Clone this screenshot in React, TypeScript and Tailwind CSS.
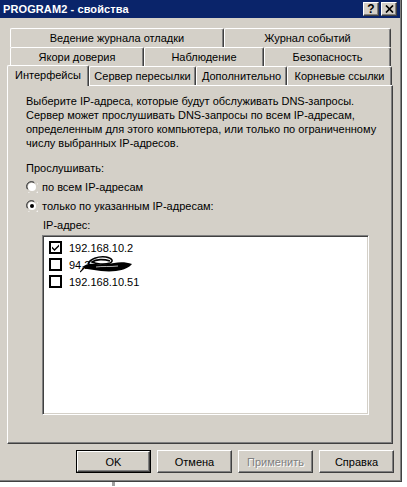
import React from 'react';

// Classic Win2000/2003 3D edges
const raised =
  'border-t border-l border-t-white border-l-white border-r border-b border-r-[#404040] border-b-[#404040] shadow-[inset_-1px_-1px_#808080]';
const sunken =
  'border-t border-l border-t-[#808080] border-l-[#808080] border-r border-b border-r-white border-b-white shadow-[inset_1px_1px_#404040,inset_-1px_-1px_#d4d0c8]';

function Tab({ label, width, selected = false }: { label: string; width: number; selected?: boolean }) {
  return (
    <div
      style={{ width }}
      className={
        'flex items-center justify-center rounded-t-[2px] border-t border-l border-white border-r border-r-[#404040] shadow-[inset_-1px_0_#808080] bg-[#d4d0c8] text-black ' +
        (selected ? 'h-[21px] -mb-px relative z-10 pb-[2px]' : 'h-[19px]')
      }
    >
      {label}
    </div>
  );
}

function TitleButton({ children }: { children: React.ReactNode }) {
  return (
    <div className={'w-[16px] h-[14px] bg-[#d4d0c8] flex items-center justify-center ' + raised}>{children}</div>
  );
}

function Radio({ checked }: { checked?: boolean }) {
  return (
    <svg width="12" height="12" viewBox="0 0 12 12" className="shrink-0">
      <path d="M1 8 A5.5 5.5 0 0 1 8 1" fill="none" stroke="#808080" strokeWidth="1" />
      <path d="M2 8.5 A4.5 4.5 0 0 1 8.5 2" fill="none" stroke="#404040" strokeWidth="1" />
      <circle cx="6" cy="6" r="4" fill="#fff" />
      <path d="M3.5 10.5 A5 5 0 0 0 10.5 3.5" fill="none" stroke="#d4d0c8" strokeWidth="1" />
      <path d="M2.5 11.5 A6 6 0 0 0 11.5 2.5" fill="none" stroke="#fff" strokeWidth="1" />
      {checked && <circle cx="6" cy="6" r="2" fill="#000" />}
    </svg>
  );
}

function Check({ checked }: { checked?: boolean }) {
  return (
    <div className="w-[13px] h-[13px] border-2 border-black bg-white flex items-center justify-center shrink-0">
      {checked && (
        <svg width="9" height="9" viewBox="0 0 9 9">
          <path d="M1 3.5 L3.5 6 L8 1.5 L8 3.5 L3.5 8 L1 5.5 Z" fill="#000" />
        </svg>
      )}
    </div>
  );
}

// black marker scribble that hides the second address
function Scribble() {
  return (
    <svg width="54" height="18" viewBox="0 0 54 18" className="-ml-[10px] -mt-[2px]">
      <path
        d="M2 12 C6 9 10 8 16 9 C22 10 28 9 34 8 C40 7 46 7 52 9 C50 12 44 15 36 16 C28 17 20 16 14 15 C9 14 5 14 2 12 Z"
        fill="#000"
      />
      <path
        d="M8 9 C10 4 18 1 26 2 C32 3 34 6 30 8 C24 10 16 9 12 7 C16 4 24 4 30 6"
        fill="none"
        stroke="#000"
        strokeWidth="1.6"
      />
      <path d="M16 12 C22 11 30 12 38 11" fill="none" stroke="#fff" strokeWidth="0.7" />
      <path d="M4 13 C2 15 1 16 0 17" fill="none" stroke="#000" strokeWidth="1.2" />
    </svg>
  );
}

function Button({ label, isDefault, disabled }: { label: string; isDefault?: boolean; disabled?: boolean }) {
  return (
    <div className={'w-[75px] h-[23px] ' + (isDefault ? 'border border-black' : '')}>
      <div
        className={
          'h-full w-full flex items-center justify-center bg-[#d4d0c8] ' +
          raised +
          (disabled ? ' text-[#808080] [text-shadow:1px_1px_#fff]' : ' text-black')
        }
      >
        {label}
      </div>
    </div>
  );
}

export default function App() {
  return (
    <div className="w-[407px] h-[487px] bg-white font-['Liberation_Sans',Arial,sans-serif] text-[11px] leading-[14px] overflow-hidden">
      <div className="w-[402px] h-[482px] bg-[#d4d0c8] border-r border-b border-[#404040] shadow-[inset_-1px_-1px_#808080] flex flex-col">
        {/* title bar */}
        <div className="h-[18px] w-[400px] bg-[#0a246a] flex items-center justify-between pl-[3px] pr-[3px]">
          <span className="text-white font-bold text-[11px] tracking-[0.1px]">PROGRAM2 - свойства</span>
          <div className="flex gap-[2px]">
            <TitleButton>
              <span className="font-bold text-[12px] leading-none text-black">?</span>
            </TitleButton>
            <TitleButton>
              <svg width="9" height="8" viewBox="0 0 9 8">
                <path d="M1 0.5 L8 7.5 M8 0.5 L1 7.5" stroke="#000" strokeWidth="1.7" />
              </svg>
            </TitleButton>
          </div>
        </div>

        {/* tabs */}
        <div className="mt-[10px] flex flex-col">
          <div className="flex ml-[10px]">
            <Tab label="Ведение журнала отладки" width={214} />
            <Tab label="Журнал событий" width={167} />
          </div>
          <div className="flex ml-[10px]">
            <Tab label="Якори доверия" width={134} />
            <Tab label="Наблюдение" width={120} />
            <Tab label="Безопасность" width={127} />
          </div>
          <div className="flex items-end ml-[7px] h-[19px]">
            <Tab label="Интерфейсы" width={82} selected />
            <Tab label="Сервер пересылки" width={107} />
            <Tab label="Дополнительно" width={91} />
            <Tab label="Корневые ссылки" width={105} />
          </div>
        </div>

        {/* page */}
        <div className={'ml-[7px] w-[386px] h-[359px] pl-[18px] pt-[8px] ' + raised}>
          <p className="text-black">
            Выберите IP-адреса, которые будут обслуживать DNS-запросы.
            <br />
            Сервер может прослушивать DNS-запросы по всем IP-адресам,
            <br />
            определенным для этого компьютера, или только по ограниченному
            <br />
            числу выбранных IP-адресов.
          </p>
          <div className="mt-[11px]">Прослушивать:</div>
          <div className="mt-[5px] flex items-center gap-[4px]">
            <Radio />
            <span>по всем IP-адресам</span>
          </div>
          <div className="mt-[5px] flex items-center gap-[4px]">
            <Radio checked />
            <span>только по указанным IP-адресам:</span>
          </div>
          <div className="mt-[5px] ml-[17px]">IP-адрес:</div>
          <div className={'mt-[3px] ml-[16px] w-[327px] h-[180px] bg-white pl-[6px] pt-[3px] ' + sunken}>
            <div className="h-[17px] flex items-center gap-[7px]">
              <Check checked />
              <span>192.168.10.2</span>
            </div>
            <div className="h-[17px] flex items-center gap-[7px]">
              <Check />
              <span className="flex items-center">
                <span>94.2</span>
                <Scribble />
              </span>
            </div>
            <div className="h-[17px] flex items-center gap-[7px]">
              <Check />
              <span>192.168.10.51</span>
            </div>
          </div>
        </div>

        {/* buttons */}
        <div className="mt-[6px] ml-[76px] flex gap-[6px]">
          <Button label="OK" isDefault />
          <Button label="Отмена" />
          <Button label="Применить" disabled />
          <Button label="Справка" />
        </div>
      </div>
      <div className="ml-[112px] w-[3px] h-[4px] bg-[#a0a0a0]" />
    </div>
  );
}
